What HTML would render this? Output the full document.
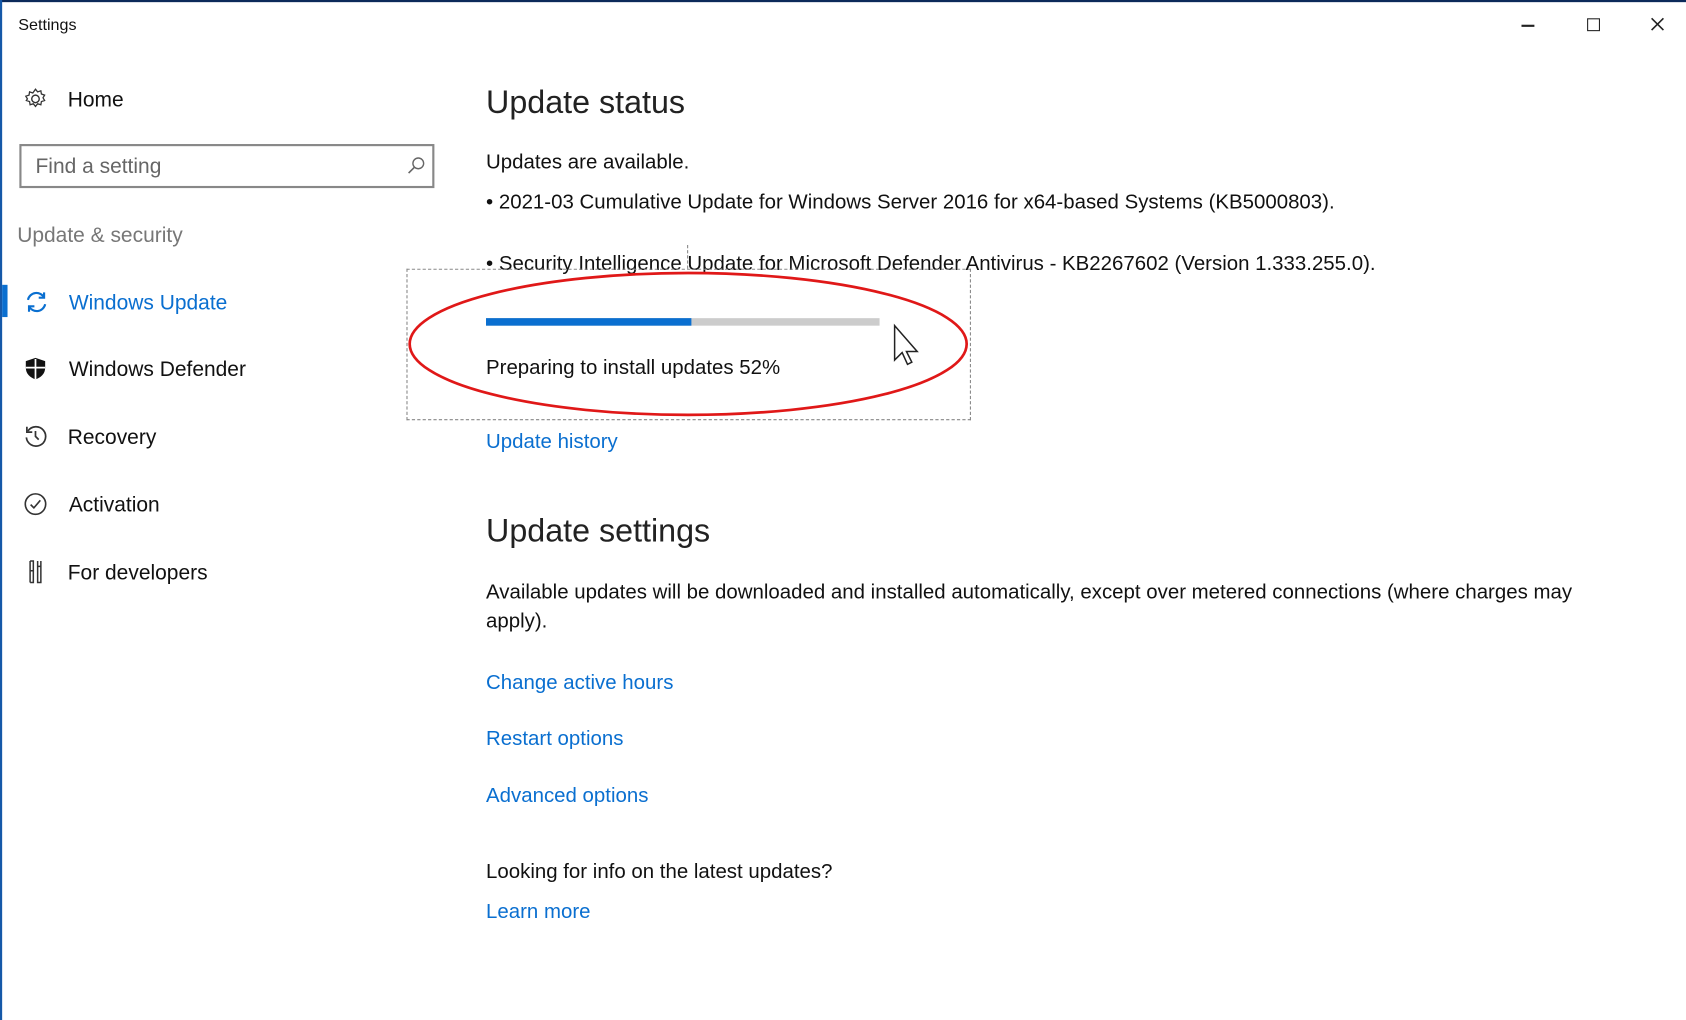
<!DOCTYPE html>
<html><head><meta charset="utf-8"><style>
html,body{margin:0;padding:0;width:1686px;height:1020px;overflow:hidden;background:#fff;}
#w{position:absolute;left:0;top:0;width:1568px;height:949px;transform:scale(1.07526,1.07482);transform-origin:0 0;font-family:"Liberation Sans",sans-serif;color:#111;}
.t{position:absolute;white-space:nowrap;}
.n{font-size:19.5px;}
.b{font-size:19px;}
.l{color:#0a6fd0;}
.h{font-size:30px;color:#222;}
</style></head><body><div id="w">
<div style="position:absolute;left:0;top:0;width:1568px;height:2px;background:#0c2a5a"></div>
<div style="position:absolute;left:0;top:0;width:2px;height:949px;background:#1558a8"></div>
<div class="t" style="left:17px;top:15px;font-size:15px">Settings</div>
<div style="position:absolute;left:1415px;top:23px;width:12px;height:1.5px;background:#222"></div>
<div style="position:absolute;left:1476px;top:17px;width:10px;height:10px;border:1.5px solid #222"></div>
<svg style="position:absolute;left:1535px;top:16px" width="13" height="13"><path d="M1 1L12 12M12 1L1 12" stroke="#222" stroke-width="1.5"/></svg>

<svg style="position:absolute;left:22px;top:81px" width="22" height="22" viewBox="0 0 22 22"><circle cx="11" cy="11" r="3.5" fill="none" stroke="#333" stroke-width="1.3"/><path d="M11 2l2 2.5 3-1 .5 3 3 1-1.5 2.5 1.5 2.5-3 1-.5 3-3-1-2 2.5-2-2.5-3 1-.5-3-3-1L3.5 11 2 8.5l3-1 .5-3 3 1z" fill="none" stroke="#333" stroke-width="1.2"/></svg>
<div class="t n" style="left:63px;top:82px">Home</div>
<div style="position:absolute;left:18px;top:134px;width:382px;height:37px;border:2px solid #888"></div>
<div class="t n" style="left:33px;top:144px;color:#666">Find a setting</div>
<svg style="position:absolute;left:378px;top:145px" width="18" height="18"><circle cx="11" cy="7" r="5" fill="none" stroke="#666" stroke-width="1.3"/><path d="M7.5 10.5L2 16" stroke="#666" stroke-width="1.5"/></svg>
<div class="t n" style="left:16px;top:208px;color:#777">Update &amp; security</div>

<div style="position:absolute;left:2px;top:265px;width:5px;height:30px;background:#0a6fd0"></div>
<svg style="position:absolute;left:22px;top:269px" width="24" height="24" viewBox="0 0 24 24"><path d="M4 10A8 8 0 0 1 19 8M20 14A8 8 0 0 1 5 16" fill="none" stroke="#0a6fd0" stroke-width="2"/><path d="M19 3v5h-5M5 21v-5h5" fill="none" stroke="#0a6fd0" stroke-width="2"/></svg>
<div class="t n l" style="left:64px;top:271px">Windows Update</div>
<svg style="position:absolute;left:22px;top:332px" width="22" height="22" viewBox="0 0 22 22"><path d="M11 1L2 4v6c0 6 4 9 9 11 5-2 9-5 9-11V4z" fill="#111"/><path d="M11 2v19M2 10h18" stroke="#fff" stroke-width="1.6"/></svg>
<div class="t n" style="left:64px;top:333px">Windows Defender</div>
<svg style="position:absolute;left:22px;top:395px" width="22" height="22" viewBox="0 0 22 22"><path d="M4 6A9 9 0 1 1 2.5 12" fill="none" stroke="#333" stroke-width="1.6"/><path d="M3 2v5h5" fill="none" stroke="#333" stroke-width="1.6"/><path d="M11 6v5l3 3" fill="none" stroke="#333" stroke-width="1.6"/></svg>
<div class="t n" style="left:63px;top:396px">Recovery</div>
<svg style="position:absolute;left:22px;top:458px" width="22" height="22" viewBox="0 0 22 22"><circle cx="11" cy="11" r="9.5" fill="none" stroke="#333" stroke-width="1.5"/><path d="M6.5 11.5l3 3 6-7" fill="none" stroke="#333" stroke-width="1.5"/></svg>
<div class="t n" style="left:64px;top:459px">Activation</div>
<svg style="position:absolute;left:24px;top:521px" width="18" height="22" viewBox="0 0 18 22"><path d="M4 1v20M4 1h3v20H4M11 1v20h3V1M11 6h3M4 10h3" fill="none" stroke="#333" stroke-width="1.4"/></svg>
<div class="t n" style="left:63px;top:522px">For developers</div>

<div class="t h" style="left:452px;top:79px">Update status</div>
<div class="t b" style="left:452px;top:141px">Updates are available.</div>
<div class="t b" style="left:452px;top:178px">• 2021-03 Cumulative Update for Windows Server 2016 for x64-based Systems (KB5000803).</div>
<div class="t b" style="left:452px;top:235px">• Security Intelligence Update for Microsoft Defender Antivirus - KB2267602 (Version 1.333.255.0).</div>
<div style="position:absolute;left:378px;top:250px;width:523px;height:139px;border:1px dashed #888"></div>
<div style="position:absolute;left:639px;top:228px;width:0;height:22px;border-left:1px dashed #888"></div>
<div style="position:absolute;left:452px;top:296px;width:366px;height:7px;background:#ccc"></div>
<div style="position:absolute;left:452px;top:296px;width:191px;height:7px;background:#0a6fd0"></div>
<div class="t b" style="left:452px;top:332px">Preparing to install updates 52%</div>
<svg style="position:absolute;left:370px;top:245px" width="540" height="150"><ellipse cx="270" cy="75" rx="259" ry="66" fill="none" stroke="#e01818" stroke-width="2.5"/><path d="M462 58v32l7-7 5 11 4-2-5-10h10z" fill="#fff" stroke="#222" stroke-width="1.4"/></svg>
<div class="t b l" style="left:452px;top:401px">Update history</div>

<div class="t h" style="left:452px;top:478px">Update settings</div>
<div class="t b" style="left:452px;top:541px">Available updates will be downloaded and installed automatically, except over metered connections (where charges may</div>
<div class="t b" style="left:452px;top:568px">apply).</div>
<div class="t b l" style="left:452px;top:625px">Change active hours</div>
<div class="t b l" style="left:452px;top:677px">Restart options</div>
<div class="t b l" style="left:452px;top:730px">Advanced options</div>
<div class="t b" style="left:452px;top:801px">Looking for info on the latest updates?</div>
<div class="t b l" style="left:452px;top:838px">Learn more</div>
</div></body></html>
